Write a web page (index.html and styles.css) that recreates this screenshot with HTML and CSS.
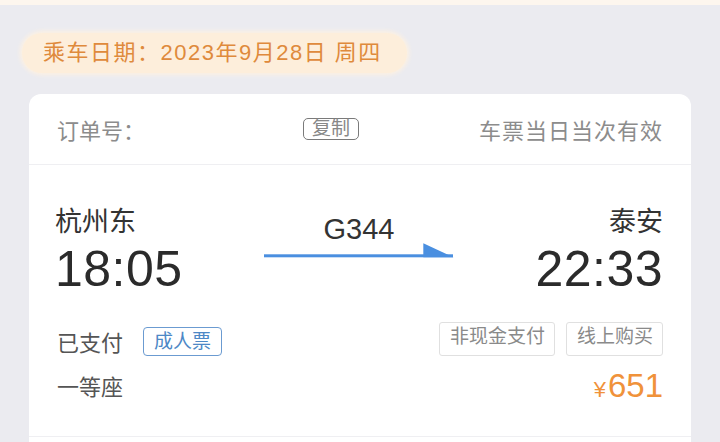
FILE: index.html
```html
<!DOCTYPE html>
<html lang="zh-CN">
<head>
<meta charset="utf-8">
<link rel="stylesheet" href="styles.css">
</head>
<body>
<div class="strip"></div>
<div class="page">
  <div class="datepill">乘车日期：2023年9月28日 周四</div>
  <div class="card">
    <div class="card-head">
      <div class="order">
        <span class="order-label">订单号：</span>
        <span class="order-mask"></span>
        <span class="copy-tag">复制</span>
      </div>
      <div class="valid">车票当日当次有效</div>
    </div>
    <div class="card-body">
      <div class="route">
        <div class="stop">
          <div class="station">杭州东</div>
          <div class="time">18:05</div>
        </div>
        <div class="train">
          <div class="train-no">G344</div>
          <svg class="arrow" width="190" height="18" viewBox="0 0 190 18">
            <rect x="0" y="13.3" width="189" height="3" fill="#4a8fe0"/>
            <polygon points="159.3,2.3 159.3,16.3 189.5,16.3" fill="#4a8fe0"/>
          </svg>
        </div>
        <div class="stop stop-end">
          <div class="station">泰安</div>
          <div class="time">22:33</div>
        </div>
      </div>
      <div class="status-row">
        <div class="status-left">
          <span class="paid">已支付</span>
          <span class="tag-blue">成人票</span>
        </div>
        <div class="status-right">
          <span class="tag-grey">非现金支付</span>
          <span class="tag-grey">线上购买</span>
        </div>
      </div>
      <div class="seat-row">
        <span class="seat">一等座</span>
        <span class="price"><span class="yen">¥</span>651</span>
      </div>
    </div>
    <div class="card-foot"></div>
  </div>
</div>
</body>
</html>
```

FILE: styles.css
```css
* {
  box-sizing: border-box;
}
html, body {
  margin: 0;
  padding: 0;
}
body {
  width: 720px;
  height: 442px;
  overflow: hidden;
  background: #ebebf0;
  font-family: "Liberation Sans", "Noto Sans CJK SC", sans-serif;
  color: #333;
}
.strip {
  height: 5px;
  background: #fdf6ee;
}
.page {
  padding-top: 28px;
}
.datepill {
  margin-left: 22px;
  width: 385px;
  height: 40px;
  line-height: 40px;
  border-radius: 20px;
  background: #fdeedb;
  color: #df8a3c;
  font-size: 22px;
  padding-left: 21px;
  letter-spacing: 1.5px;
  box-shadow: 0 0 4px 2px #fdf1e2;
  white-space: nowrap;
}
.card {
  margin-top: 21px;
  margin-left: 29px;
  width: 662px;
  background: #fff;
  border-radius: 12px 12px 0 0;
}
.card-head {
  height: 71px;
  padding: 0 28px;
  display: flex;
  align-items: center;
  justify-content: space-between;
  border-bottom: 1px solid #efeff2;
  color: #8c8c8c;
  font-size: 22px;
}
.order {
  display: flex;
  align-items: center;
}
.order-mask {
  width: 158px;
}
.copy-tag {
  font-size: 19px;
  line-height: 20px;
  padding: 0 8px;
  border: 1.5px solid #7a7a7a;
  border-radius: 5px;
  color: #888;
}
.valid {
  letter-spacing: 1px;
}
.card-body {
  padding: 0 28px 28px;
  border-bottom: 1px solid #efeff2;
}
.route {
  display: grid;
  grid-template-columns: 1fr 190px 1fr;
  padding-top: 37px;
  margin-left: -2px;
}
.stop-end {
  text-align: right;
}
.station {
  font-size: 27px;
  line-height: 36px;
  color: #333;
  font-family: "Noto Sans CJK SC", sans-serif;
}
.time {
  font-size: 50px;
  line-height: 62px;
  color: #2b2b2b;
  letter-spacing: 0.5px;
}
.train {
  padding-top: 9px;
  text-align: center;
}
.train-no {
  font-size: 29px;
  line-height: 36px;
  color: #333;
}
.arrow {
  display: block;
  margin-top: -6px;
}
.status-row {
  display: flex;
  justify-content: space-between;
  padding-top: 22px;
  height: 56px;
}
.status-left {
  display: flex;
  align-items: center;
  gap: 20px;
  margin-top: 4px;
  height: 30px;
}
.paid {
  font-size: 22px;
  color: #555;
}
.tag-blue {
  font-size: 19px;
  line-height: 27px;
  padding: 0 10px;
  border: 1.5px solid #6b9bd1;
  border-radius: 4px;
  color: #4d88c6;
}
.status-right {
  display: flex;
  gap: 11px;
}
.tag-grey {
  font-size: 19px;
  line-height: 28px;
  padding: 0 9px 0 10px;
  border: 1px solid #e0e0e0;
  border-radius: 3px;
  color: #8a8a8a;
}
.seat-row {
  display: flex;
  justify-content: space-between;
  align-items: center;
  padding-top: 12px;
  height: 52px;
}
.seat {
  font-size: 22px;
  color: #555;
  line-height: 40px;
}
.price {
  font-size: 33px;
  line-height: 40px;
  color: #f0923a;
}
.yen {
  font-size: 22px;
  margin-right: 2px;
}
.card-foot {
  height: 40px;
}
```
